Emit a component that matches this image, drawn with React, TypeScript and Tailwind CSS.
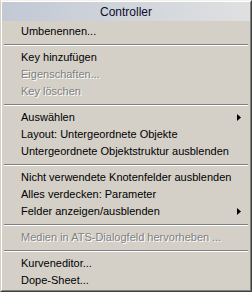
import React from 'react';

type MenuEntry =
  | { type: 'item'; label: string; disabled?: boolean; submenu?: boolean }
  | { type: 'sep' };

const entries: MenuEntry[] = [
  { type: 'item', label: 'Umbenennen...' },
  { type: 'sep' },
  { type: 'item', label: 'Key hinzufügen' },
  { type: 'item', label: 'Eigenschaften...', disabled: true },
  { type: 'item', label: 'Key löschen', disabled: true },
  { type: 'sep' },
  { type: 'item', label: 'Auswählen', submenu: true },
  { type: 'item', label: 'Layout: Untergeordnete Objekte' },
  { type: 'item', label: 'Untergeordnete Objektstruktur ausblenden' },
  { type: 'sep' },
  { type: 'item', label: 'Nicht verwendete Knotenfelder ausblenden' },
  { type: 'item', label: 'Alles verdecken: Parameter' },
  { type: 'item', label: 'Felder anzeigen/ausblenden', submenu: true },
  { type: 'sep' },
  { type: 'item', label: 'Medien in ATS-Dialogfeld hervorheben ...', disabled: true },
  { type: 'sep' },
  { type: 'item', label: 'Kurveneditor...' },
  { type: 'item', label: 'Dope-Sheet...' },
];

const Arrow = () => (
  <svg width="4" height="7" viewBox="0 0 4 7" className="block">
    <path d="M0 0 L4 3.5 L0 7 Z" fill="#000" />
  </svg>
);

export default function App() {
  return (
    <div className="w-[252px] h-[292px] bg-[#d4d0c8] border border-t-[#f4f2ea] border-l-[#d4d0c8] border-r-[#404040] border-b-[#404040] font-['Liberation_Sans',Tahoma,sans-serif] text-[11px] text-black">
      <div className="h-full flex flex-col border border-t-white border-l-white border-r-[#808080] border-b-[#808080]">
        {/* Title */}
        <div className="h-[19px] flex items-center justify-center bg-gradient-to-r from-[#c2c9d5] to-[#dfe0e1] text-[#0c0c2a] text-[12px]">
          Controller
        </div>
        <div className="pt-[2px] px-[1px] flex flex-col">
          {entries.map((e, i) =>
            e.type === 'sep' ? (
              <div key={i} className="h-[9px] flex flex-col justify-center px-[1px]">
                <div className="h-px bg-[#808080]" />
                <div className="h-px bg-white" />
              </div>
            ) : (
              <div key={i} className="h-[17px] flex items-center pl-[18px] pr-[8px]">
                <span
                  className={
                    e.disabled
                      ? 'flex-1 whitespace-nowrap text-[#808080] [text-shadow:1px_1px_0_#fff]'
                      : 'flex-1 whitespace-nowrap'
                  }
                >
                  {e.label}
                </span>
                {e.submenu && <Arrow />}
              </div>
            )
          )}
        </div>
      </div>
    </div>
  );
}
